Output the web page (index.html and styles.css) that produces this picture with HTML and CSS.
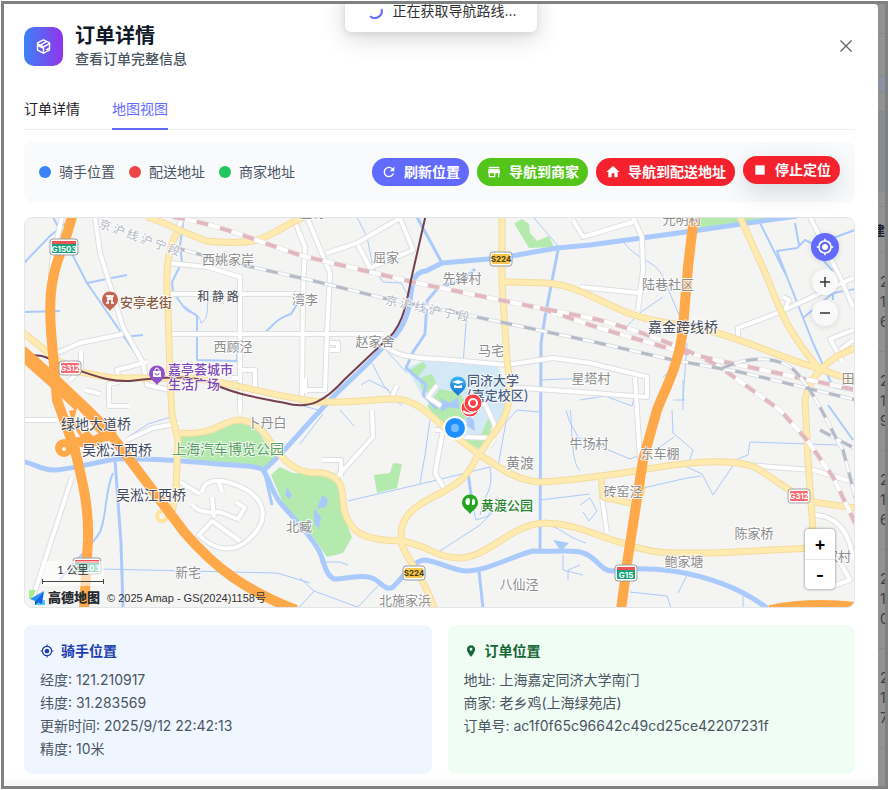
FILE: index.html
```html
<!DOCTYPE html>
<html lang="zh-CN">
<head>
<meta charset="utf-8">
<meta name="viewport" content="width=device-width, initial-scale=1">
<title>订单详情</title>
<link rel="stylesheet" href="styles.css">
</head>
<body>
<div class="frame">
  <div class="toast" role="status">
    <svg class="spinner" viewBox="0 0 16 16"><path d="M3.2 13.2A7 7 0 0 0 14.6 6"/></svg>
    <span>正在获取导航路线...</span>
  </div>

  <main class="dialog">
    <header class="head">
      <span class="head-icon">
        <svg viewBox="0 0 24 24"><path d="M12 2.500 20.500 7v10L12 21.500 3.500 17V7z"/><path d="M3.500 8 12 12.500 20.500 8M12 12.500v9"/><path d="M7.500 10l8.500-5M15.500 17l5-3"/><path d="M4 8l8 4.500v3L4 12z" fill="#fff" stroke="none"/></svg>
      </span>
      <div class="head-text">
        <h1>订单详情</h1>
        <p>查看订单完整信息</p>
      </div>
      <button class="close" type="button" aria-label="关闭"><svg viewBox="0 0 12 12"><path d="M.5.500l11 11M11.500.500l-11 11"/></svg></button>
    </header>

    <nav class="tabs">
      <a href="#detail">订单详情</a>
      <a href="#map" class="active">地图视图</a>
    </nav>

    <section class="toolbar">
      <ul class="legend">
        <li><i class="dot blue"></i>骑手位置</li>
        <li><i class="dot red"></i>配送地址</li>
        <li><i class="dot green"></i>商家地址</li>
      </ul>
      <div class="actions">
        <button class="btn primary" type="button"><svg viewBox="0 0 24 24"><path d="M17.650 6.350A7.958 7.958 0 0 0 12 4c-4.420 0-7.990 3.580-7.990 8s3.570 8 7.990 8c3.730 0 6.840-2.550 7.730-6h-2.080A5.990 5.990 0 0 1 12 18c-3.310 0-6-2.690-6-6s2.690-6 6-6c1.660 0 3.140.690 4.220 1.780L13 11h7V4l-2.350 2.350z"/></svg>刷新位置</button>
        <button class="btn success" type="button"><svg viewBox="0 0 24 24"><path d="M20 4H4v2h16V4zm1 10v-2l-1-5H4l-1 5v2h1v6h10v-6h4v6h2v-6h1zm-9 4H6v-4h6v4z"/></svg>导航到商家</button>
        <button class="btn danger" type="button"><svg viewBox="0 0 24 24"><path d="M10 20v-6h4v6h5v-8h3L12 3 2 12h3v8z"/></svg>导航到配送地址</button>
        <button class="btn danger lifted" type="button"><svg viewBox="0 0 24 24"><path d="M5 5h14v14H5z"/></svg>停止定位</button>
      </div>
    </section>

    <section class="map">
      <svg class="map-canvas" viewBox="25 218 829 389" preserveAspectRatio="xMidYMid slice">
        <defs>
          <g id="shield-s"><rect x="-11" y="-7" width="22" height="14" rx="3" fill="#fff" stroke="#999c9f"/><rect x="-9" y="-5" width="18" height="10" rx="1" fill="#f7c64b"/></g>
          <g id="shield-r"><rect x="-11" y="-7" width="22" height="14" rx="3" fill="#fff" stroke="#a5a5a8"/><rect x="-9" y="-5" width="18" height="10" rx="1" fill="#f76a70"/></g>
          <g id="shield-g"><rect x="-11" y="-8" width="22" height="16" rx="3" fill="#fff" stroke="#999c9f"/><rect x="-9" y="-6" width="18" height="12" rx="1" fill="#14a37c"/><path d="M-9-3v-3H9v3z" fill="#ee5253"/></g>
          <g id="shield-gw"><rect x="-14" y="-8" width="28" height="16" rx="3" fill="#fff" stroke="#999c9f"/><rect x="-12" y="-6" width="24" height="12" rx="1" fill="#14a37c"/><path d="M-12-3v-3h24v3z" fill="#ee5253"/></g>
          <path id="pin" d="M0 11C-2 7.500-8 5.500-8-.500a8 8 0 0 1 16 0C8 5.500 2 7.500 0 11z"/>
          <linearGradient id="gb" x2="0" y2="1"><stop stop-color="#3cb3f7"/><stop offset="1" stop-color="#1674d1"/></linearGradient>

          <g id="streets">
            <path d="M95 217L100 253 123 327 143 363 147 385 170 390M57 353L80 343 123 334M168 263L207 267 240 277V412M170 294H303M170 334H383M293 217L305 247 303 294 302 396M307 217L330 273 327 333 325 390H302"/>
            <path d="M383 345C395 354 405 358 440 359L507 365 553 358 590 363 647 377V397L580 392 507 387M327 253L357 243 400 218 413 250 370 268 358 245M72 477L33 597M62 217L52 262 50 300M182 217L177 233"/>
            <path d="M202 492C204 479 220 476 247 490 270 505 265 525 250 538 236 553 215 552 199 535L212 521 240 541M180 482l20 12M192 504q6 10 28 8M212 497l2 20M218 480l4 12M236 502l9 6-8 12M220 512l20 8"/>
            <path d="M372 410L373 437 337 477 320 472M322 460h19v17M443 430L435 473 445 490M435 430h10M810 217L840 277 853 307M853 278L780 312 738 328V337M633 217L642 237 643 270 638 310M580 287L640 293M633 222L583 237 573 220"/>
            <path d="M635 377L640 460M747 465L813 470 853 482M602 497L607 533M815 515C835 516 850 530 853 560M840 562l10 18-20 7M127 440L153 428 180 423M24 420H57M437 385l-9 12 13 9M466 437l25 1 4-12-9-20-18-15M495 438l-6 8M240 370l15 0 0 25M232 378h8M147 362l-30 8 2 12-10 2v22h20M330 343h8v7h-8M783 297l6 3-4 9M853 330l-23 9 12 22M840 350l13-10M397 385l-5 12M305 378v15M81 351v18l-12 12M85 390l15 4"/>
          </g>
          <g id="mains">
            <path d="M177 233C165 255 166 280 168 310L170 377 172 415 178 440 176 490 172 513M147 217C170 224 180 232 207 241 225 243 240 243 253 241 275 236 285 223 310 215"/>
            <path d="M20 330L57 360 80 372 112 378H190C220 380 270 395 300 399 327 406 370 399 397 399 415 400 430 414 447 430L477 453C505 472 520 481 540 482 565 481 620 474 647 469 700 460 740 458 760 470 775 480 795 496 813 502L856 508"/>
            <path d="M502 217V283L507 360C514 405 505 420 495 432L477 457C468 475 462 483 433 497 405 511 398 524 402 545 408 561 423 575 435 610"/>
            <path d="M180 433C215 436 220 421 240 420 265 423 270 445 280 455 300 477 315 472 323 473 345 478 342 492 344 510 350 531 360 540 400 541 430 545 435 558 460 558 490 557 510 524 545 523 580 524 600 538 623 543 655 555 670 553 713 553L813 548"/>
            <path d="M503 282L547 283C590 287 610 314 663 322 730 330 770 355 817 368L856 382M740 217L767 277C780 312 790 335 820 370M856 348C832 355 809 375 805 400L808 460 814 545M601 477L603 497 630 503M634 505q12-14 6-26"/>
          </g>
          <path id="rail-a" d="M173 217C225 225 270 247 307 257L417 283 500 300 590 318C635 328 690 350 720 367L780 410 807 440 833 477 856 525M540 308L590 325C640 340 680 353 730 363L856 390"/>
          <path id="rail-b" d="M173 247L220 260 310 280 383 298 467 315 590 341 673 360 740 372 856 400M723 368C750 355 785 355 800 377 820 400 835 440 843 450L856 500M820 430l34 18"/>
        </defs>

        <rect x="0" y="200" width="880" height="430" fill="#f4f4f3"/>

        <g fill="#b4eaae">
          <path d="M180 436L213 433 237 422 250 424 260 434 275 457 267 467 207 462 180 457z"/>
          <path d="M280 467L293 473 310 474 333 478 343 493 345 520 352 537 343 553 327 557 313 537 283 503 271 475z"/>
          <path d="M374 475l16-2 3-10 9 1-5 24-20 5z"/>
          <path d="M515 223l7-4 7 5 1 9 7 8 12-5 5 11-25 1-14-23z"/>
          <path d="M698 217h74l-25 5-49 7z"/>
        </g>
        <path fill="#d3e9f5" d="M407 368l20-9 70 6 12 24-3 25-24 34-36-24-26-32z"/>
        <g fill="#b4eaae">
          <path d="M410 370l13-8 4 4-9 11-8-3z"/>
          <path d="M420 378l12-4 4 8-4 14-11-8z"/>
          <path d="M427 406l13-17 20 4 10 17-8 15-13 8z"/>
          <path d="M462 440l18-3 8-18 8 4-1 12-14 15z"/>
        </g>
        <path fill="#aac9fb" d="M441 398l9 5 8-6 1 12-10-2-8 5zM466 412l8 9 1 10-8-5zM322 495l6 4-2 8-9 2zM287 487l5 8-3 4-4-4zM314 508l7 9-2 12-5-5zM553 540l16 3-8 8z"/>

        <!-- water -->
        <g class="water">
          <path class="w5" d="M20 461C35 463 42 471 56 470 78 468 100 461 117 459 150 458 180 461 207 463 230 466 250 464 262 469 270 478 272 495 283 506 295 520 308 532 318 549 325 561 324 574 334 579 348 579 365 573 376 580 382 584 386 591 393 587 403 578 413 560 425 560 440 562 452 570 466 571 490 570 512 556 533 551 550 552 565 550 580 552 596 555 600 571 612 571 630 568 650 568 673 571 705 576 738 586 767 608"/>
          <path class="w5" d="M264 470C285 452 296 436 320 411 338 389 360 374 383 347 396 337 406 325 410 302 412 285 412 272 426 271L442 263 500 258 557 248 590 245 693 231 797 216"/>
          <path class="w3" d="M442 263L417 217M479 571l4 37M468 473l4 28M558 250L545 317 541 343 540 552M115 460L121 543 123 608M264 470l8 35"/>
          <path class="w3" d="M475 269l-10 9-18 7-10 4-10 12-2 33-12 18-7 16 20 17-3 10 14 14"/>
          <path class="w2" d="M113 473C105 490 107 515 100 532 92 546 75 560 60 580M23 264L50 236 76 215M53 217L87 283 127 275M87 283L140 360 150 385M24 312L60 311M123 337l20-2"/>
          <path class="w2" d="M184 216l-4 30 2 16-10 20 1 10 10 14 14 10 0 44 40 1 2-28h25c10-8 13-15 27-19 5-8 8-12 8-18"/>
          <path class="w1" d="M128 437l20-13 26-8M100 569L277 573 310 583M348 501L433 481 490 467M437 553L480 525 497 508M473 507l3 13 12-4 4-8M490 467c4 25-6 26-10 48M183 307c7 10 15 2 18 16 7-4 6-10 7-27M27 263l-7-8"/>
          <path class="w1" d="M357 217l10 20 6 30 10 15 18 1 7 12M534 218l24 28M623 242C640 262 655 260 663 277L680 317M687 343L683 400M663 297l-22 15-15 15M466 323l-3 42M383 347l24 26M300 444l23-30M340 410l14 16M430 420l-5 35-5 28M498 466l8-44 11-12 23 2"/>
          <path class="w2" d="M760 223L787 277 813 343 833 387 853 391M787 277l-10-26 20-3 8-8 10 5 8 15 9 10 1 30M803 318l30-25 22-4M811 246l44-16M853 440l-25-35M799 245l-4-22"/>
          <path class="w1" d="M672 410L673 433 693 450 687 467 702 474 713 495 732 467 735 460 748 455 750 442 837 445M643 488l44-10 14-2M540 500L590 494M580 438l50 21 30-12 14-10M580 400l25-4 27 10 4-14M580 505l10-7 7 13-8 10-6-9M585 450l-16-30-3-10M540 380l50-2M541 357l30 2M683 410v-30M663 377l20-17M685 400h-12"/>
          <path class="w1" d="M320 562l20 0 8 3M300 578l14 13 46 17M314 591l-18 20M379 585l-24 25M300 405l22 6M372 363l12 23 18 20M361 385l8-5 20 10M580 565l-12 5v10M625 540l3 10M630 592l37 4 4 12M688 573l-10 20M743 593v15M580 470c-10-5-8-60-10-60M563 555l0 15 20 5M541 525c20 0 20 10 45 18"/>
        </g>

        <!-- roads: casing first, then surface -->
        <use href="#streets" class="road-case"/>
        <use href="#streets" class="road-fill"/>
        <use href="#mains" class="main-case"/>
        <use href="#mains" class="main-fill"/>
        <circle cx="162" cy="516" r="5" class="ring"/>

        <!-- railways -->
        <use href="#rail-a" class="rail-case"/><use href="#rail-a" class="rail-base"/><use href="#rail-a" class="rail-pink"/>
        <use href="#rail-b" class="rail-case thin"/><use href="#rail-b" class="rail-base thin"/><use href="#rail-b" class="rail-gray"/>
        <path class="metro" d="M20 357C45 351 50 361 67 367 90 373 105 382 130 381 160 377 190 376 207 381 235 395 260 398 285 403 310 410 325 401 345 379L383 343C403 328 406 305 411 280L426 214"/>

        <!-- expressways -->
        <g class="express">
          <path d="M73 214L63 247C48 280 49 310 52 343L57 400 75 450C82 480 89 505 88 540L84 610"/>
          <path class="wide" d="M20 351L55 382 87 412 112 437"/>
          <path d="M108 431L130 460 160 500 185 533C215 568 245 590 296 610M74 410q3 18 16 30M66 443L95 441 108 434"/>
          <path d="M694 216L688 267 683 327C680 365 662 395 657 410L643 460 628 557 621 610"/>
          <path class="wide" d="M770 612Q810 604 856 609"/>
        </g>
        <circle cx="64" cy="448" r="9" fill="#ffa94a"/><circle cx="64" cy="449" r="2" fill="#f4f4f3"/>
        <path fill="#f4f4f3" d="M77 408l17 19-12 7-8-14z"/>

        <!-- road shields -->
        <use href="#shield-gw" x="64" y="247"/><text class="sh" x="64" y="252">G1503</text>
        <use href="#shield-r" x="70" y="368"/><text class="sh" x="70" y="371">G312</text>
        <use href="#shield-s" x="501" y="259"/><text class="sh dark" x="501" y="262">S224</text>
        <use href="#shield-s" x="414" y="573"/><text class="sh dark" x="414" y="576">S224</text>
        <use href="#shield-r" x="799" y="496"/><text class="sh" x="799" y="499">G312</text>
        <use href="#shield-g" x="626" y="573"/><text class="sh" x="626" y="578">G15</text>
        <use href="#shield-gw" x="87" y="566"/><text class="sh" x="87" y="571">G1503</text>

        <!-- place names -->
        <g class="place">
          <text x="228" y="264">西姚家岸</text><text x="386" y="262">屈家</text><text x="462" y="283">先锋村</text>
          <text x="305" y="304">湾李</text><text x="233" y="351">西顾泾</text><text x="375" y="346">赵家舍</text>
          <text x="491" y="355">马宅</text><text x="668" y="289">陆巷社区</text><text x="591" y="383">星塔村</text>
          <text x="682" y="224">光明村</text><text x="848" y="383">田</text><text x="267" y="427">卜丹白</text>
          <text x="589" y="448">牛场村</text><text x="660" y="458">东车棚</text><text x="623" y="496">砖窑泾</text>
          <text x="520" y="468" class="lg">黄渡</text><text x="754" y="538">陈家桥</text><text x="684" y="566">鲍家塘</text>
          <text x="519" y="589">八仙泾</text><text x="405" y="605">北施家浜</text><text x="188" y="577">新宅</text>
          <text x="299" y="531">北臧</text><text x="838" y="561">家村</text><text x="312" y="217">庄村</text>
          <text x="18" y="521">村</text>
        </g>
        <text class="street" x="218" y="301">和 静 路</text>
        <g class="railname">
          <text transform="translate(98 227) rotate(20)">京 沪 线 沪 宁 段</text>
          <text transform="translate(385 304) rotate(12)">京 沪 线 沪 宁 段</text>
        </g>
        <g class="bridge">
          <text x="683" y="332">嘉金跨线桥</text><text x="96" y="429">绿地大道桥</text>
          <text x="117" y="455">吴淞江西桥</text><text x="151" y="500">吴淞江西桥</text>
        </g>
        <text class="park" x="228" y="454">上海汽车博览公园</text>
        <text class="poi brown" x="120" y="307">安亭老街</text>
        <text class="poi purple" x="168" y="374">嘉亭荟城市</text>
        <text class="poi purple" x="168" y="389">生活广场</text>
        <text class="poi green" x="481" y="510">黄渡公园</text>
        <text class="poi navy" x="467" y="385">同济大学</text>
        <text class="poi navy" x="467" y="400">(嘉定校区)</text>

        <!-- points of interest -->
        <g transform="translate(110 300)"><use href="#pin" fill="#c46455"/><path d="M-4-4h8M-3-1h6M-2-4v7M2-4v7M0-5v4M-4 3h3M1 3h3" stroke="#fff" stroke-width="1.500" fill="none"/></g>
        <g transform="translate(157 374)"><use href="#pin" fill="#9052c8"/><path d="M-4-3h8v6h-8z" fill="#fff"/><path d="M-2-3v-1a2 2 0 0 1 4 0v1" stroke="#fff" fill="none"/><path d="M-2-1a2 2 0 0 0 4 0" stroke="#9052c8" fill="none"/></g>
        <g transform="translate(470 503)"><use href="#pin" fill="#24a61e"/><path d="M-3 2c-3-3-1-7 1-7s2 2 2 4L-1 2zM2 2V-1c0-3 1-4 2-3s2 4 0 6z" fill="#fff"/></g>
        <g transform="translate(458 385)"><use href="#pin" fill="url(#gb)"/><path d="M-6-3l6-2 6 2-6 2zM-4 0l4 1 4-1v3H-4z" fill="#fff"/></g>

        <!-- live markers -->
        <circle cx="470" cy="408" r="9" fill="#fb4146" stroke="#fff"/><path d="M463 411q6 5 13 0" stroke="#fff" stroke-width="2" fill="none"/>
        <circle cx="473" cy="403" r="9" fill="#fb4146" stroke="#fff"/><circle cx="473" cy="403" r="4" fill="none" stroke="#fff" stroke-width="2"/>
        <circle cx="455" cy="428" r="11" fill="#1e8fff" stroke="#fff" stroke-width="2"/><circle cx="455" cy="428" r="4" fill="#78bcff"/>
      </svg>

      <div class="map-tools">
        <button class="round locate" type="button" aria-label="定位"><svg viewBox="0 0 24 24"><path d="M12 8c-2.210 0-4 1.790-4 4s1.790 4 4 4 4-1.790 4-4-1.790-4-4-4zm8.940 3A8.994 8.994 0 0 0 13 3.060V1h-2v2.060A8.994 8.994 0 0 0 3.060 11H1v2h2.060A8.994 8.994 0 0 0 11 20.940V23h2v-2.060A8.994 8.994 0 0 0 20.940 13H23v-2h-2.060zM12 19c-3.870 0-7-3.130-7-7s3.130-7 7-7 7 3.130 7 7-3.130 7-7 7z"/></svg></button>
        <button class="round" type="button" aria-label="放大"><svg viewBox="0 0 12 12"><path d="M1 6h10M6 1v10"/></svg></button>
        <button class="round" type="button" aria-label="缩小"><svg viewBox="0 0 12 12"><path d="M1 6h10"/></svg></button>
      </div>
      <div class="zoom-box">
        <button type="button">+</button>
        <button type="button">-</button>
      </div>
      <div class="credits">
        <div class="scale">1 公里</div>
        <div class="brand">
          <svg viewBox="0 0 16 16"><path d="M0 0h7L3 9H0z" fill="#a9ec8e"/><path d="M6 11l10-1v5H6z" fill="#4cc8f5"/><path d="M15 1L1 9l5 2z" fill="#2593fb"/><path d="M15 1L6 11l7 3z" fill="#1267e8"/><path d="M6 11v4l3-3z" fill="#0a4dbb"/></svg>
          <b>高德地图</b><span>© 2025 Amap - GS(2024)1158号</span>
        </div>
      </div>
    </section>

    <section class="cards">
      <article class="card rider">
        <h2><svg viewBox="0 0 24 24"><path d="M12 8c-2.210 0-4 1.790-4 4s1.790 4 4 4 4-1.790 4-4-1.790-4-4-4zm8.940 3A8.994 8.994 0 0 0 13 3.060V1h-2v2.060A8.994 8.994 0 0 0 3.060 11H1v2h2.060A8.994 8.994 0 0 0 11 20.940V23h2v-2.060A8.994 8.994 0 0 0 20.940 13H23v-2h-2.060zM12 19c-3.870 0-7-3.130-7-7s3.130-7 7-7 7 3.130 7 7-3.130 7-7 7z"/></svg>骑手位置</h2>
        <p>经度: 121.210917</p>
        <p>纬度: 31.283569</p>
        <p>更新时间: 2025/9/12 22:42:13</p>
        <p>精度: 10米</p>
      </article>
      <article class="card order">
        <h2><svg viewBox="0 0 24 24"><path d="M12 2C8.130 2 5 5.130 5 9c0 5.250 7 13 7 13s7-7.750 7-13c0-3.870-3.130-7-7-7zm0 9.500a2.500 2.500 0 0 1 0-5 2.500 2.500 0 0 1 0 5z"/></svg>订单位置</h2>
        <p>地址: 上海嘉定同济大学南门</p>
        <p>商家: 老乡鸡(上海绿苑店)</p>
        <p>订单号: ac1f0f65c96642c49cd25ce42207231f</p>
      </article>
    </section>
  </main>

  <aside class="behind">
    <div class="seg s1"></div><div class="seg s2"></div><div class="seg s3"></div><div class="seg s4"></div><div class="seg s5"></div><div class="seg s6"></div>
    <div class="cell th">建</div>
    <div class="cell">2<br>1<br>6</div>
    <div class="cell">2<br>1<br>9</div>
    <div class="cell">2<br>1<br>6</div>
    <div class="cell">2<br>1<br>0</div>
    <div class="cell">2<br>1<br>7</div>
  </aside>
</div>
</body>
</html>
```
FILE: styles.css
```css
* { box-sizing: border-box; }

body {
  margin: 0;
  padding: 1px;
  background: #fff;
  font-family: Inter, "Noto Sans CJK SC", sans-serif;
  font-size: 14px;
  line-height: 22px;
  color: #1f2329;
}

h1, h2, p, ul { margin: 0; padding: 0; }
button { font: inherit; border: 0; padding: 0; cursor: pointer; }
svg { display: block; }

.frame {
  position: relative;
  display: flex;
  min-height: calc(100vh - 2px);
  border: 3px solid #808281;
  overflow: hidden;
  background: #929292;
}

.dialog {
  flex: 1;
  min-width: 0;
  padding: 19px 23px 12px 20px;
  border-radius: 0 4px 0 0;
  background: linear-gradient(to top, #f6f6f6, #fff 12px);
}

.toast {
  position: absolute;
  z-index: 2;
  top: -14px;
  left: 50%;
  transform: translateX(-50%);
  display: flex;
  gap: 10px;
  align-items: center;
  padding: 10px 20px 10px 22px;
  margin-left: -4px;
  border-radius: 6px;
  background: #fff;
  color: #303133;
  white-space: nowrap;
  box-shadow: 0 6px 24px rgba(0, 0, 0, .16), 0 2px 6px rgba(0, 0, 0, .08);
}
.spinner { width: 16px; height: 16px; fill: none; stroke: #636bff; stroke-width: 2; }

.head { display: flex; align-items: center; gap: 12px; }
.head-icon {
  display: grid;
  place-items: center;
  width: 39px;
  height: 39px;
  border-radius: 10px;
  background: linear-gradient(90deg, #3b82f6, #9333ea);
}
.head-icon svg { width: 17px; height: 17px; fill: none; stroke: #fff; stroke-width: 2; stroke-linejoin: round; }
.head-text { flex: 1; }
.head h1 { font-size: 20px; line-height: 26px; font-weight: 600; color: #111827; }
.head p { line-height: 20px; color: #4b5563; font-weight: 500; }
.close { width: 18px; height: 18px; display: grid; place-items: center; background: none; }
.close svg { width: 12px; height: 12px; stroke: #606367; stroke-width: 1.3; fill: none; }

.tabs {
  display: flex;
  gap: 32px;
  margin-top: 21px;
  border-bottom: 1px solid #eff0f2;
}
.tabs a {
  padding: 8px 0;
  margin-bottom: -1px;
  border-bottom: 2px solid transparent;
  color: #1f2329;
  text-decoration: none;
}
.tabs a.active { color: #636bff; border-color: #636bff; }

.toolbar {
  display: flex;
  flex-wrap: wrap;
  align-items: center;
  justify-content: space-between;
  gap: 8px;
  margin-top: 12px;
  padding: 16px 15px;
  border-radius: 8px;
  background: #f9fafc;
}
.legend { display: flex; gap: 14px; list-style: none; color: #4b5563; }
.legend li { display: flex; align-items: center; gap: 8px; }
.dot { width: 12px; height: 12px; border-radius: 50%; }
.blue { background: #3b82f6; }
.red { background: #ef4444; }
.dot.green { background: #22c55e; }

.actions { display: flex; gap: 8px; }
.btn {
  display: flex;
  align-items: center;
  gap: 7px;
  height: 28px;
  padding: 0 9px;
  border-radius: 14px;
  color: #fff;
  font-weight: 600;
  white-space: nowrap;
}
.btn svg { width: 16px; height: 16px; fill: currentColor; }
.primary { background: #636bff; }
.success { background: #52c41a; }
.danger { background: #f5222d; }
.lifted { transform: translateY(-2px); box-shadow: 0 8px 24px rgba(0, 0, 0, .14); }

.map {
  position: relative;
  margin-top: 15px;
  border: 1px solid #e3e5e8;
  border-radius: 8px;
  overflow: hidden;
}
.map-canvas { width: 100%; height: 389px; }

.water path { fill: none; stroke: #abcafc; stroke-linejoin: round; }
.water .w5 { stroke-width: 5; }
.water .w3 { stroke-width: 3; }
.water .w2 { stroke-width: 2; }
.water .w1 { stroke-width: 1; }
.road-case, .road-fill, .main-case, .main-fill { fill: none; stroke-linejoin: round; }
.road-case { stroke: #dedfe2; stroke-width: 6; }
.road-fill { stroke: #fff; stroke-width: 4; }
.main-case { stroke: #f3dca0; stroke-width: 7; }
.main-fill { stroke: #ffeab0; stroke-width: 5; }
.ring { fill: none; stroke: #ffe49a; stroke-width: 4; }
.rail-case { fill: none; stroke: #e2dcdf; stroke-width: 5; }
.rail-base { fill: none; stroke: #fff; stroke-width: 4; }
.rail-case.thin { stroke: #dcdfe4; stroke-width: 4; }
.rail-base.thin { stroke-width: 2; }
.rail-pink { fill: none; stroke: #e2b8bf; stroke-width: 4; stroke-dasharray: 12 12; }
.rail-gray { fill: none; stroke: #b5bbc6; stroke-width: 3; stroke-dasharray: 12 12; }
.metro { fill: none; stroke: #74404f; stroke-width: 2; }
.express { fill: none; stroke: #ffa94a; stroke-width: 10; }
.express .wide { stroke-width: 14; }

.map-canvas text { font-family: "Noto Sans CJK SC", sans-serif; paint-order: stroke; stroke: #fff; stroke-opacity: .8; stroke-width: 2px; }
.place { fill: #8d8d8d; font-size: 13px; text-anchor: middle; }
.place .lg { font-size: 14px; }
.street { fill: #5c6168; font-size: 12px; font-weight: 500; text-anchor: middle; }
.railname { fill: #b2b8c4; font-size: 12px; }
.bridge { fill: #414960; font-size: 14px; text-anchor: middle; }
.park { fill: #5aa067; font-size: 14px; text-anchor: middle; }
.poi { font-size: 13px; font-weight: 500; }
.brown { fill: #8b5a3c; }
.purple { fill: #8048b5; }
.poi.green { fill: #26862b; }
.navy { fill: #4a6187; }
.map-canvas .sh { font-family: Inter, sans-serif; fill: #fff; stroke: none; font-size: 8px; font-weight: 700; text-anchor: middle; }
.map-canvas .sh.dark { fill: #4b3c10; }

.map-tools {
  position: absolute;
  top: 15px;
  right: 15px;
  display: flex;
  flex-direction: column;
  align-items: center;
  gap: 5px;
}
.round {
  display: grid;
  place-items: center;
  width: 26px;
  height: 26px;
  border-radius: 50%;
  background: #f9f9f9;
  box-shadow: 0 1px 6px rgba(0, 0, 0, .12);
}
.round svg { width: 12px; height: 12px; stroke: #333; stroke-width: 1.5; fill: none; }
.locate { width: 28px; height: 28px; background: #636bff; margin-bottom: 3px; }
.locate svg { width: 18px; height: 18px; fill: #fff; stroke: none; }

.zoom-box {
  position: absolute;
  right: 19px;
  bottom: 18px;
  display: flex;
  flex-direction: column;
  width: 30px;
  border-radius: 4px;
  overflow: hidden;
  background: #fff;
  box-shadow: 0 0 3px rgba(0, 0, 0, .5);
}
.zoom-box button { height: 30px; background: none; color: #000; font-size: 18px; font-weight: 600; line-height: 28px; }
.zoom-box button + button { border-top: 1px solid #e6e6e6; }

.credits {
  position: absolute;
  left: 4px;
  bottom: 0;
  font-family: "Liberation Sans", "Noto Sans CJK SC", sans-serif;
  color: #333;
}
.scale {
  position: relative;
  width: 62px;
  margin: 0 0 3px 13px;
  padding-bottom: 2px;
  background: rgba(255, 255, 255, .6);
  font-size: 11px;
  line-height: 18px;
  text-align: center;
}
.scale::after {
  content: "";
  display: block;
  height: 5px;
  border: solid #444;
  border-width: 0 1px;
  background: linear-gradient(#444, #444) center / 100% 1px no-repeat;
}
.brand { display: flex; align-items: center; gap: 3px; line-height: 18px; font-size: 11px; white-space: nowrap; }
.brand svg { width: 16px; height: 16px; }
.brand b { font-size: 13px; font-weight: 900; color: #26292e; }
.brand span { margin-left: 4px; }

.cards {
  display: grid;
  grid-template-columns: 1fr 1fr;
  gap: 16px;
  margin-top: 17px;
}
.card { padding: 15px 16px 14px; border-radius: 8px; color: #4b5563; }
.card h2 { display: flex; align-items: center; gap: 7px; margin-bottom: 6px; font-size: 14px; line-height: 22px; font-weight: 600; }
.card h2 svg { width: 14px; height: 14px; fill: currentColor; }
.card p { line-height: 23px; overflow-wrap: anywhere; }
.rider { background: #eff6ff; }
.rider h2 { color: #1e40af; }
.order { background: #f0fdf4; }
.order h2 { color: #166534; }

.behind {
  flex: none;
  width: 7px;
  display: flex;
  flex-direction: column;
  overflow: hidden;
  color: #3b3f45;
}
.seg { border-bottom: 1px solid #878787; }
.s1 { height: 30px; }
.s2 { height: 43px; }
.s3 { height: 15px; background: #8993a2; }
.s4 { height: 20px; }
.s5 { height: 79px; background: #888d94; }
.s6 { height: 16px; }
.cell {
  display: flex;
  align-items: center;
  height: 99px;
  padding-left: 2px;
  border-bottom: 1px solid #888;
  line-height: 20px;
}
.th { height: 46px; justify-content: flex-end; font-weight: 600; font-size: 13px; color: #1f2329; }
```
